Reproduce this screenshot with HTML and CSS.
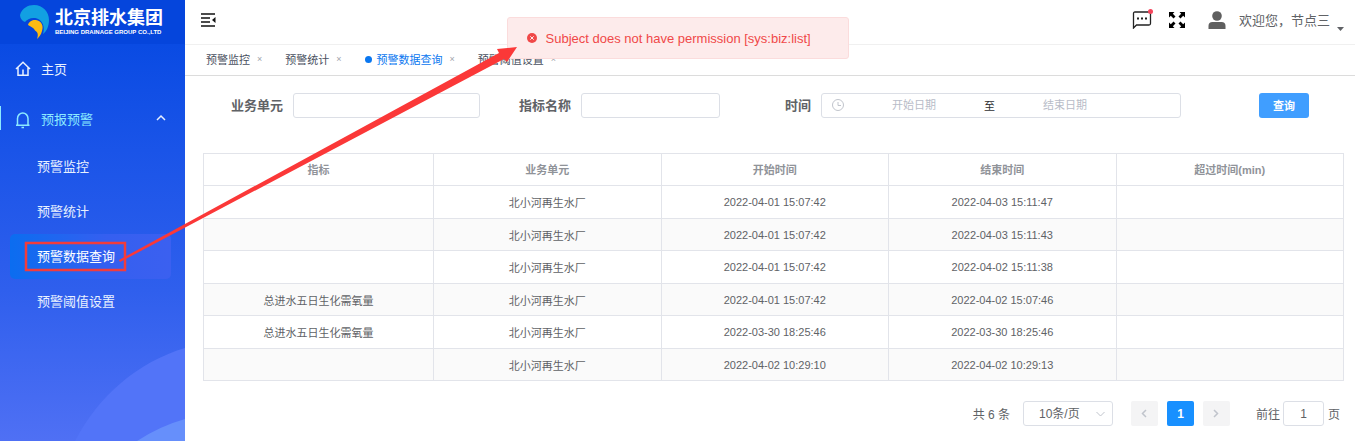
FILE: index.html
```html
<!DOCTYPE html>
<html lang="zh-CN">
<head>
<meta charset="utf-8">
<title>预警数据查询</title>
<link rel="stylesheet" href="styles.css">
</head>
<body>
<div class="app">
  <aside class="sidebar">
    <svg class="sidebar-waves" viewBox="0 0 185 441" preserveAspectRatio="xMaxYMax slice" aria-hidden="true">
      <path d="M185 348C138 362 98 396 75 441H185Z" fill="#5274f8"/>
      <path d="M185 419Q160 426 137 441H185Z" fill="#668ffb"/>
    </svg>
    <div class="logo">
      <svg class="logo-mark" viewBox="0 0 29 34" aria-hidden="true">
        <path d="M0 10C2 3 8 0 14 0C23 0 29 7 29 15C29 22 26 27 23 29C25 22 23 16 17 13.500C12 12 7 14 5 17C2 16 0 13 0 10Z" fill="#12a0e2"/>
        <path d="M8 20C9 16 13 14.500 16 15C21 16 24 20 22 26C21 30 19 32 17 34C18.500 30 18 27 15 25.500C14 23 11 22 8 20Z" fill="#fdbb12"/>
      </svg>
      <div class="logo-text">
        <span class="logo-name">北京排水集团</span>
        <span class="logo-sub">BEIJING DRAINAGE GROUP CO.,LTD</span>
      </div>
    </div>
    <nav class="menu">
      <a class="menu-item" href="#">
        <svg class="menu-icon" viewBox="0 0 16 16"><path d="M1 9L8 2.300L15 9M3 7.500V15.200H13V7.500M8 9.500V15"/></svg>
        <span>主页</span>
      </a>
      <a class="menu-item menu-open" href="#">
        <svg class="menu-icon" viewBox="0 0 16 16"><path d="M1 15.200H14.500M2.500 15V8.500A5.250 5.500 0 0 1 13 8.500V15M6.500 17.500H9"/></svg>
        <span>预报预警</span>
        <svg class="menu-arrow" viewBox="0 0 10 6"><path d="M1 5L5 1L9 5"/></svg>
      </a>
      <a class="sub-item" href="#">预警监控</a>
      <a class="sub-item" href="#">预警统计</a>
      <a class="sub-item current" href="#">预警数据查询</a>
      <a class="sub-item" href="#">预警阈值设置</a>
    </nav>
  </aside>

  <div class="main">
    <header class="topbar">
      <button class="icon-btn" type="button" aria-label="收起菜单">
        <svg width="15" height="14" viewBox="0 0 15 14"><path d="M0 1H14M0 5H9M0 9H9M0 13H14" stroke="#111" stroke-width="1.500"/><path d="M14.500 4V10L11 7Z" fill="#111"/></svg>
      </button>
      <div class="user-area">
        <button class="icon-btn message" type="button" aria-label="消息">
          <svg width="20" height="18" viewBox="0 0 20 18"><path d="M3 1H17Q18.500 1 18.500 2.500V12.500Q18.500 14 17 14H4.500L1.500 17V2.500Q1.500 1 3 1Z" fill="none" stroke="#222" stroke-width="1.300"/><path d="M5 6.500H7V8.500H5ZM9 6.500H11V8.500H9ZM13 6.500H15V8.500H13Z" fill="#222"/></svg>
          <i class="dot"></i>
        </button>
        <button class="icon-btn" type="button" aria-label="全屏">
          <svg width="16" height="16" viewBox="0 0 16 16"><path d="M0 0H5.500L3.800 1.800L6.500 4.500L4.500 6.500L1.800 3.800L0 5.500ZM16 0V5.500L14.200 3.800L11.500 6.500L9.500 4.500L12.200 1.800L10.500 0ZM0 16V10.500L1.800 12.200L4.500 9.500L6.500 11.500L3.800 14.200L5.500 16ZM16 16H10.500L12.200 14.200L9.500 11.500L11.500 9.500L14.200 12.200L16 10.500Z"/></svg>
        </button>
        <button class="user" type="button">
          <svg width="18" height="18" viewBox="0 0 18 18" fill="#5f5f5f"><circle cx="9" cy="5" r="4.800"/><path d="M0.500 18V15Q0.500 11 4.500 11H13.500Q17.500 11 17.500 15V18Z"/></svg>
          <span>欢迎您，节点三</span>
          <svg class="caret" width="7" height="4" viewBox="0 0 7 4"><path d="M0 0H7L3.500 4Z" fill="#606266"/></svg>
        </button>
      </div>
    </header>

    <nav class="tabs">
      <a class="tab" href="#">预警监控<span class="close">×</span></a>
      <a class="tab" href="#">预警统计<span class="close">×</span></a>
      <a class="tab active" href="#">预警数据查询<span class="close">×</span></a>
      <a class="tab" href="#">预警阈值设置<span class="close">×</span></a>
    </nav>

    <main class="content">
      <form class="filters">
        <div class="field unit"><label for="unit">业务单元</label><input id="unit" type="text"></div>
        <div class="field metric"><label for="metric">指标名称</label><input id="metric" type="text"></div>
        <div class="field time">
          <label for="start">时间</label>
          <div class="range">
            <svg width="12" height="12" viewBox="0 0 12 12" fill="none" stroke="#c0c4cc"><circle cx="6" cy="6" r="5.500"/><path d="M6 3V6.500H9"/></svg>
            <input id="start" type="text" placeholder="开始日期">
            <span>至</span>
            <input type="text" placeholder="结束日期" aria-label="结束日期">
          </div>
        </div>
        <button class="search" type="button">查询</button>
      </form>

      <table class="grid">
        <thead><tr><th>指标</th><th>业务单元</th><th>开始时间</th><th>结束时间</th><th>超过时间(min)</th></tr></thead>
        <tbody>
          <tr><td></td><td>北小河再生水厂</td><td>2022-04-01 15:07:42</td><td>2022-04-03 15:11:47</td><td></td></tr>
          <tr><td></td><td>北小河再生水厂</td><td>2022-04-01 15:07:42</td><td>2022-04-03 15:11:43</td><td></td></tr>
          <tr><td></td><td>北小河再生水厂</td><td>2022-04-01 15:07:42</td><td>2022-04-02 15:11:38</td><td></td></tr>
          <tr><td>总进水五日生化需氧量</td><td>北小河再生水厂</td><td>2022-04-01 15:07:42</td><td>2022-04-02 15:07:46</td><td></td></tr>
          <tr><td>总进水五日生化需氧量</td><td>北小河再生水厂</td><td>2022-03-30 18:25:46</td><td>2022-03-30 18:25:46</td><td></td></tr>
          <tr><td></td><td>北小河再生水厂</td><td>2022-04-02 10:29:10</td><td>2022-04-02 10:29:13</td><td></td></tr>
        </tbody>
      </table>

      <div class="pager">
        <span class="total">共 6 条</span>
        <select class="page-size" aria-label="每页条数"><option>10条/页</option></select>
        <button class="page" type="button" aria-label="上一页" disabled><svg width="6" height="9" viewBox="0 0 6 9"><path d="M5 1L1.500 4.500L5 8"/></svg></button>
        <button class="page on" type="button">1</button>
        <button class="page" type="button" aria-label="下一页" disabled><svg width="6" height="9" viewBox="0 0 6 9"><path d="M1 1L4.500 4.500L1 8"/></svg></button>
        <label class="jump">前往<input type="text" value="1">页</label>
      </div>
    </main>
  </div>

  <div class="toast" role="alert">
    <svg width="10" height="10" viewBox="0 0 10 10"><circle cx="5" cy="5" r="5" fill="#f04848"/><path d="M3.300 3.300L6.700 6.700M6.700 3.300L3.300 6.700" stroke="#fdebeb"/></svg>
    <span>Subject does not have permission [sys:biz:list]</span>
  </div>
  <svg class="markup" width="520" height="275" viewBox="0 0 520 275" aria-hidden="true">
    <rect x="26" y="243" width="99" height="27" fill="none" stroke="#f23c3c" stroke-width="2.500"/>
    <path d="M119 260L499 53L497 49L517 47L507 62L504 59L120 262Z" fill="#fb3838"/>
  </svg>
</div>
</body>
</html>
```
FILE: styles.css
```css
* { box-sizing: border-box; }
body {
  margin: 0;
  font-family: "Liberation Sans", "Noto Sans CJK SC", sans-serif;
  font-size: 13px;
  color: #606266;
  background: #fff;
}
a { text-decoration: none; color: inherit; }
button, input, select { font: inherit; color: inherit; }
button { padding: 0; border: 0; background: none; }
svg { display: block; flex: none; }

.app { position: relative; display: flex; min-height: 100vh; }

.sidebar {
  position: relative;
  flex: none;
  width: 185px;
  background: linear-gradient(#0648e0 0, #0a4be3 45px, #1a54e8 150px, #2f5fed 290px, #4f70f4 100%);
  color: #e8f1ff;
}
.sidebar-waves { position: absolute; right: 0; bottom: 0; width: 100%; height: 100%; }
.logo {
  position: relative;
  display: flex;
  align-items: center;
  gap: 6px;
  height: 44px;
  padding-left: 20px;
  background: #0545dc;
}
.logo-mark { width: 29px; height: 34px; }
.logo-text { display: flex; flex-direction: column; color: #fff; white-space: nowrap; font-weight: 700; }
.logo-name { font-size: 18px; line-height: 20px; }
.logo-sub { font-size: 6px; line-height: 8px; }

.menu { position: relative; }
.menu-item { display: flex; align-items: center; height: 50px; padding: 0 19px 2px 15px; }
.menu-icon, .menu-arrow { fill: none; stroke: currentColor; stroke-width: 1.5; overflow: visible; }
.menu-icon { width: 16px; height: 16px; margin-right: 10px; }
.menu-arrow { width: 10px; height: 6px; margin-left: auto; stroke: #e8f1ff; }
.menu-open { color: #8ceaff; }
.menu-open::before {
  content: "";
  position: absolute;
  left: 0;
  width: 1px;
  height: 24px;
  background: #8ceaff;
}
.sub-item { display: flex; align-items: center; height: 45px; margin: 0 14px 0 10px; padding: 0 0 2px 27px; }
.current { border-radius: 5px; background: linear-gradient(90deg, #0b6df0, #355ff0 60%, #3b60f0); color: #fff; }

.main { flex: 1; min-width: 0; }
.topbar {
  display: flex;
  align-items: center;
  justify-content: space-between;
  height: 45px;
  padding: 0 11px 4px 16px;
  border-bottom: 1px solid #f0f0f0;
}
.icon-btn { position: relative; }
.user-area { display: flex; align-items: center; gap: 17px; }
.dot { position: absolute; top: -2px; right: -1px; width: 5px; height: 5px; border-radius: 50%; background: #f5455c; }
.user { display: flex; align-items: center; margin-left: 6px; }
.user span { margin: 0 7px 0 13px; padding-bottom: 2px; }
.caret { align-self: flex-end; }

.tabs {
  display: flex;
  align-items: center;
  gap: 23px;
  height: 31px;
  padding: 0 0 2px 21px;
  border-bottom: 1px solid #dcdcdc;
  font-size: 11px;
}
.tab { display: flex; align-items: center; color: #495060; }
.close { margin-left: 7px; font-size: 9px; color: #a0a4ab; }
.active { color: #0a77f0; }
.active::before { content: ""; width: 7px; height: 7px; margin-right: 5px; border-radius: 50%; background: #0a77f0; }

.content { padding: 17px 11px 14px 18px; }
.filters { display: flex; align-items: center; margin-bottom: 35px; padding: 0 35px 0 28px; }
.field { display: flex; align-items: center; gap: 10px; }
.field label { padding-bottom: 3px; font-weight: 700; white-space: nowrap; }
.field > input, .range { height: 25px; border: 1px solid #dcdfe6; border-radius: 3px; background: #fff; }
.unit input { width: 187px; }
.metric { margin-left: 39px; }
.metric input { width: 139px; }
.time { margin-left: 65px; }
.range { display: flex; align-items: center; gap: 3px; width: 360px; padding: 0 10px 2px; font-size: 11px; color: #303133; }
.range input { flex: 0 1 134px; min-width: 0; padding: 0; border: 0; background: none; text-align: center; outline: 0; }
.range input::placeholder { color: #b8bcc8; }
.search { width: 50px; height: 25px; margin-left: auto; padding-bottom: 2px; border-radius: 3px; background: #409eff; color: #fff; font-size: 11px; font-weight: 700; }

.grid { width: 100%; table-layout: fixed; border-collapse: collapse; font-size: 11px; text-align: center; }
.grid th, .grid td { height: 32px; padding: 0; border: 1px solid #e2e4ea; }
.grid th { padding-bottom: 2px; color: #909399; }
.grid th:first-child { width: 230px; }
.grid tbody tr:nth-child(odd) td { height: 33px; }
.grid tbody tr:nth-child(even) { background: #fafafa; }

.pager { display: flex; align-items: center; justify-content: flex-end; margin-top: 20px; padding-right: 4px; font-size: 12px; }
.page-size {
  width: 90px;
  height: 25px;
  margin: 0 18px 0 13px;
  padding-left: 15px;
  border: 1px solid #dcdfe6;
  border-radius: 3px;
  appearance: none;
  background: url("data:image/svg+xml,%3Csvg xmlns='http://www.w3.org/2000/svg' width='9' height='6' fill='none' stroke='%23c0c4cc'%3E%3Cpath d='M.5 1l4 4 4-4'/%3E%3C/svg%3E") no-repeat right 7px center #fff;
}
.page { display: grid; place-items: center; width: 27px; height: 25px; margin-right: 9px; border-radius: 2px; background: #f4f4f5; }
.page path { fill: none; stroke: #c0c4cc; stroke-width: 1.5; }
.on { background: #1890ff; color: #fff; font-weight: 700; }
.jump { display: flex; align-items: center; margin-left: 17px; }
.jump input { width: 41px; height: 25px; margin: 0 4px 0 3px; padding: 0; border: 1px solid #dcdfe6; border-radius: 3px; text-align: center; }

.toast {
  position: absolute;
  top: 17px;
  left: 50%;
  display: flex;
  align-items: center;
  gap: 9px;
  width: 342px;
  height: 42px;
  padding-left: 19px;
  border: 1px solid #fbdcdc;
  border-radius: 3px;
  background: #fdebeb;
  color: #f04848;
  transform: translateX(-50%);
  white-space: nowrap;
}
.markup { position: absolute; top: 0; left: 0; pointer-events: none; }
```
